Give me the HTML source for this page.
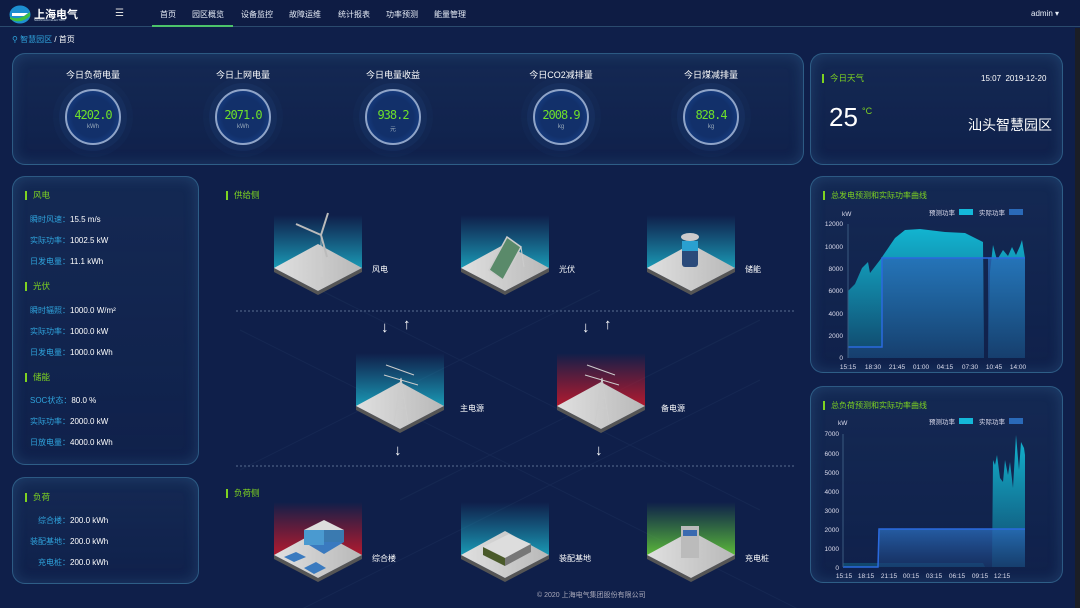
<!DOCTYPE html>
<html><head><meta charset="utf-8">
<style>
*{margin:0;padding:0;box-sizing:border-box}
body{width:1080px;height:608px;overflow:hidden;background:#0f1f4a;font-family:"Liberation Sans","Noto Sans CJK SC",sans-serif;color:#fff;position:relative}
.a{position:absolute;white-space:nowrap}
.nav{position:absolute;left:0;top:0;width:1080px;height:27px;background:#0e1c44;border-bottom:1px solid #2a4a6e}
.nav span{position:absolute;top:9px;font-size:8px;color:#e8eef8}
.panel{position:absolute;border:1px solid rgba(80,160,200,.45);border-radius:13px;background:linear-gradient(180deg,rgba(30,60,100,.35),rgba(20,40,80,.25));box-shadow:inset 0 0 14px rgba(70,140,190,.25)}
.h{position:absolute;font-size:8.5px;color:#7ed321;padding-left:6px;border-left:2px solid #7ed321;line-height:9px}
.lb{position:absolute;font-size:8px;color:#2fa3dc}
.lb b{color:#fff;font-weight:normal}
.gt{position:absolute;font-size:9px;color:#fff;width:120px;text-align:center;top:68px}
.g{position:absolute;top:89px;width:56px;height:56px;border-radius:50%;border:2px solid #8fa4c8;background:radial-gradient(circle,#12306a 55%,#1a4a9a 100%);box-shadow:0 0 0 6px rgba(40,80,140,.18),0 0 0 12px rgba(40,80,140,.08)}
.g .v{position:absolute;top:17px;width:100%;text-align:center;color:#6ee02a;font-size:12px;font-family:"DejaVu Sans Mono",monospace;letter-spacing:-1px}
.g .u{position:absolute;top:33px;width:100%;text-align:center;color:#9ab;font-size:6px}
.tl{position:absolute;font-size:8px;color:#fff}
.arr{position:absolute;font-size:15px;color:#fff;font-weight:bold}
</style></head><body>
<div class="nav">
 <svg class="a" style="left:9px;top:5px" width="22" height="19" viewBox="0 0 22 19"><ellipse cx="11" cy="9.5" rx="10.5" ry="9" fill="#1d8fd0"/><path d="M1 12 Q11 16 21 7 L21 11 Q11 20 1 14Z" fill="#3fbf3f"/><path d="M3 8 L19 8 L15 11 L3 11Z" fill="#fff"/></svg>
 <div class="a" style="left:34px;top:6px;font-size:11px;font-weight:bold">上海电气</div>
 <div class="a" style="left:34px;top:18px;font-size:3px;color:#cde">SHANGHAI ELECTRIC</div>
 <div class="a" style="left:115px;top:8px;font-size:10px;color:#ddd">☰</div>
 <span style="left:160px">首页</span><span style="left:192px">园区概览</span><span style="left:241px">设备监控</span><span style="left:289px">故障运维</span><span style="left:338px">统计报表</span><span style="left:386px">功率预测</span><span style="left:434px">能量管理</span>
 <div class="a" style="left:152px;top:25px;width:81px;height:2px;background:#4cc36a"></div>
 <span style="left:1031px">admin ▾</span>
</div>
<div class="a" style="left:12px;top:34px;font-size:8px;color:#2fa3dc">⚲ 智慧园区 <span style="color:#fff">/ 首页</span></div>

<div class="panel" style="left:12px;top:53px;width:792px;height:112px"></div>
<div class="gt" style="left:33px">今日负荷电量</div><div class="gt" style="left:183px">今日上网电量</div><div class="gt" style="left:333px">今日电量收益</div><div class="gt" style="left:501px">今日CO2减排量</div><div class="gt" style="left:651px">今日煤减排量</div>
<div class="g" style="left:65px"><div class="v">4202.0</div><div class="u">kWh</div></div>
<div class="g" style="left:215px"><div class="v">2071.0</div><div class="u">kWh</div></div>
<div class="g" style="left:365px"><div class="v">938.2</div><div class="u">元</div></div>
<div class="g" style="left:533px"><div class="v">2008.9</div><div class="u">kg</div></div>
<div class="g" style="left:683px"><div class="v">828.4</div><div class="u">kg</div></div>

<div class="panel" style="left:810px;top:53px;width:253px;height:112px"></div>
<div class="h" style="left:822px;top:74px">今日天气</div>
<div class="a" style="left:981px;top:74px;font-size:8px">15:07&nbsp; 2019-12-20</div>
<div class="a" style="left:829px;top:102px;font-size:26px">25</div>
<div class="a" style="left:862px;top:106px;font-size:9px;color:#7ed321">°C</div>
<div class="a" style="left:968px;top:115px;font-size:14px">汕头智慧园区</div>

<div class="panel" style="left:12px;top:176px;width:187px;height:289px"></div>
<div class="h" style="left:25px;top:191px">风电</div>
<div class="lb" style="left:30px;top:214px">瞬时风速：<b>15.5 m/s</b></div>
<div class="lb" style="left:30px;top:235px">实际功率：<b>1002.5 kW</b></div>
<div class="lb" style="left:30px;top:256px">日发电量：<b>11.1 kWh</b></div>
<div class="h" style="left:25px;top:282px">光伏</div>
<div class="lb" style="left:30px;top:305px">瞬时辐照：<b>1000.0 W/m²</b></div>
<div class="lb" style="left:30px;top:326px">实际功率：<b>1000.0 kW</b></div>
<div class="lb" style="left:30px;top:347px">日发电量：<b>1000.0 kWh</b></div>
<div class="h" style="left:25px;top:373px">储能</div>
<div class="lb" style="left:30px;top:395px">SOC状态：<b>80.0 %</b></div>
<div class="lb" style="left:30px;top:416px">实际功率：<b>2000.0 kW</b></div>
<div class="lb" style="left:30px;top:437px">日放电量：<b>4000.0 kWh</b></div>

<div class="panel" style="left:12px;top:477px;width:187px;height:107px"></div>
<div class="h" style="left:25px;top:493px">负荷</div>
<div class="lb" style="left:38px;top:515px">综合楼：<b>200.0 kWh</b></div>
<div class="lb" style="left:30px;top:536px">装配基地：<b>200.0 kWh</b></div>
<div class="lb" style="left:38px;top:557px">充电桩：<b>200.0 kWh</b></div>

<svg class="a" style="left:200px;top:170px" width="610" height="438" viewBox="0 0 610 438">
 <defs>
  <linearGradient id="tb" x1="0" y1="0" x2="0" y2="1"><stop offset="0" stop-color="#1a8fb0" stop-opacity="0"/><stop offset="1" stop-color="#1a9ab5"/></linearGradient>
  <linearGradient id="rd" x1="0" y1="0" x2="0" y2="1"><stop offset="0" stop-color="#c01a2a" stop-opacity="0"/><stop offset="1" stop-color="#b01a30"/></linearGradient>
  <linearGradient id="gr" x1="0" y1="0" x2="0" y2="1"><stop offset="0" stop-color="#4caf3a" stop-opacity="0"/><stop offset="1" stop-color="#5cb83a"/></linearGradient>
  <linearGradient id="pl" x1="0" y1="0" x2="1" y2="0"><stop offset="0" stop-color="#e0e0e0"/><stop offset="1" stop-color="#b8b8b8"/></linearGradient>
  <g id="base"><polygon points="0,57 44,80 88,57 88,53 44,76 0,53" fill="#555"/><polygon points="0,53 44,29 88,53 44,76" fill="url(#pl)"/></g>
 </defs>
 <g stroke="rgba(120,150,200,.07)" stroke-width="1" fill="none">
  <path d="M40 160 L600 440 M120 120 L560 340 M40 300 L400 120 M200 330 L560 150 M100 440 L560 210"/>
 </g>
 <line x1="36" y1="141" x2="595" y2="141" stroke="#5a6e90" stroke-dasharray="2,2"/>
 <line x1="36" y1="296" x2="595" y2="296" stroke="#5a6e90" stroke-dasharray="2,2"/>
 <g transform="translate(74,45)"><rect width="88" height="53" fill="url(#tb)"/><use href="#base"/><path d="M45 62 L47 20 L49 62Z" fill="#ccc"/><path d="M47 20 L22 9 M47 20 L54 -2 M47 20 L53 42" stroke="#bbb" stroke-width="2"/></g>
 <g transform="translate(261,45)"><rect width="88" height="53" fill="url(#tb)"/><use href="#base"/><polygon points="28,55 46,22 60,32 42,65" fill="#5a8a6a" stroke="#ccc" stroke-width="1.5"/><path d="M60 32 L63 52" stroke="#ccc"/></g>
 <g transform="translate(447,45)"><rect width="88" height="53" fill="url(#tb)"/><use href="#base"/><rect x="35" y="26" width="16" height="26" rx="3" fill="#2a4a7a"/><rect x="35" y="26" width="16" height="10" fill="#2aa0d0"/><ellipse cx="43" cy="22" rx="9" ry="4" fill="#ccc"/></g>
 <g transform="translate(156,183)"><rect width="88" height="53" fill="url(#tb)"/><use href="#base"/><path d="M38 70 L45 25 L52 70 M40 55 L50 55 M41 45 L49 45 M28 22 L62 32 M30 12 L58 22" stroke="#ccc" stroke-width="1" fill="none"/></g>
 <g transform="translate(357,183)"><rect width="88" height="53" fill="url(#rd)"/><use href="#base"/><path d="M38 70 L45 25 L52 70 M40 55 L50 55 M41 45 L49 45 M28 22 L62 32 M30 12 L58 22" stroke="#ccc" stroke-width="1" fill="none"/></g>
 <g transform="translate(74,332)"><rect width="88" height="53" fill="url(#rd)"/><use href="#base"/><polygon points="30,40 50,30 70,40 50,52" fill="#3a7abf"/><polygon points="30,28 50,18 70,28 50,40" fill="#ddd"/><rect x="30" y="28" width="20" height="15" fill="#4a9ad0"/><rect x="50" y="28" width="20" height="12" fill="#3a7ab0"/><polygon points="10,55 22,50 32,55 20,60" fill="#3a7abf"/><polygon points="30,66 42,60 52,66 40,72" fill="#3a7abf"/></g>
 <g transform="translate(261,332)"><rect width="88" height="53" fill="url(#tb)"/><use href="#base"/><polygon points="22,45 48,32 70,42 44,56" fill="#ddd"/><polygon points="22,45 44,56 44,64 22,53" fill="#4a5a2a"/><polygon points="44,56 70,42 70,50 44,64" fill="#777"/></g>
 <g transform="translate(447,332)"><rect width="88" height="53" fill="url(#gr)"/><use href="#base"/><rect x="34" y="24" width="18" height="32" fill="#bbb"/><rect x="36" y="28" width="14" height="6" fill="#3a6ab0"/></g>
</svg>
<div class="h" style="left:226px;top:191px">供给侧</div>
<div class="h" style="left:226px;top:489px">负荷侧</div>
<div class="tl" style="left:372px;top:264px">风电</div>
<div class="tl" style="left:559px;top:264px">光伏</div>
<div class="tl" style="left:745px;top:264px">储能</div>
<div class="tl" style="left:460px;top:403px">主电源</div>
<div class="tl" style="left:661px;top:403px">备电源</div>
<div class="tl" style="left:372px;top:553px">综合楼</div>
<div class="tl" style="left:559px;top:553px">装配基地</div>
<div class="tl" style="left:745px;top:553px">充电桩</div>
<div class="arr" style="left:381px;top:319px">↓</div><div class="arr" style="left:403px;top:316px">↑</div>
<div class="arr" style="left:582px;top:319px">↓</div><div class="arr" style="left:604px;top:316px">↑</div>
<div class="arr" style="left:394px;top:442px">↓</div><div class="arr" style="left:595px;top:442px">↓</div>
<div class="a" style="left:537px;top:590px;font-size:7px;color:#aab">© 2020 上海电气集团股份有限公司</div>

<div class="panel" style="left:810px;top:176px;width:253px;height:197px"></div>
<div class="panel" style="left:810px;top:386px;width:253px;height:197px"></div>
<div class="h" style="left:823px;top:191px;font-size:8px">总发电预测和实际功率曲线</div>
<div class="h" style="left:823px;top:401px;font-size:8px">总负荷预测和实际功率曲线</div>
<svg class="a" style="left:810px;top:170px" width="265" height="438" viewBox="810 170 265 438" font-size="6.5" fill="#dde" font-family="Liberation Sans,Noto Sans CJK SC,sans-serif">
 <defs>
  <linearGradient id="c1" x1="0" y1="0" x2="0" y2="1"><stop offset="0" stop-color="#12b4d0"/><stop offset="1" stop-color="#11456a"/></linearGradient>
  <linearGradient id="c2" x1="0" y1="0" x2="0" y2="1"><stop offset="0" stop-color="#2a6ab8" stop-opacity=".8"/><stop offset="1" stop-color="#1a3a70" stop-opacity=".6"/></linearGradient>
 </defs>
 <text x="842" y="216">kW</text>
 <text x="929" y="215">预测功率</text><rect x="959" y="209" width="14" height="6" fill="#14b8d8"/>
 <text x="979" y="215">实际功率</text><rect x="1009" y="209" width="14" height="6" fill="#2a6ab8"/>
 <g text-anchor="end"><text x="843" y="226">12000</text><text x="843" y="249">10000</text><text x="843" y="271">8000</text><text x="843" y="293">6000</text><text x="843" y="316">4000</text><text x="843" y="338">2000</text><text x="843" y="360">0</text></g>
 <path d="M848 291 L855 284 L862 268 L868 262 L870 273 L880 260 L895 238 L905 230 L920 229 L945 232 L965 233 L983 242 L984 358 L988 358 L990 272 L993 245 L997 260 L1003 250 L1008 256 L1012 247 L1016 255 L1020 246 L1022 240 L1025 258 L1025 358 L848 358Z" fill="url(#c1)"/>
 <path d="M848 347 L882 347 L882 258 L983 258 L984 358 L988 358 L988 258 L1025 258 L1025 358 L848 358Z" fill="url(#c2)"/>
 <path d="M848 347 L882 347 L882 258 L1025 258" stroke="#2a6adf" stroke-width="1.5" fill="none"/>
 <line x1="848" y1="224" x2="848" y2="358" stroke="#3a5a80"/>
 <g text-anchor="middle"><text x="848" y="369">15:15</text><text x="873" y="369">18:30</text><text x="897" y="369">21:45</text><text x="921" y="369">01:00</text><text x="945" y="369">04:15</text><text x="970" y="369">07:30</text><text x="994" y="369">10:45</text><text x="1018" y="369">14:00</text></g>

 <text x="838" y="425">kW</text>
 <text x="929" y="424">预测功率</text><rect x="959" y="418" width="14" height="6" fill="#14b8d8"/>
 <text x="979" y="424">实际功率</text><rect x="1009" y="418" width="14" height="6" fill="#2a6ab8"/>
 <g text-anchor="end"><text x="839" y="436">7000</text><text x="839" y="456">6000</text><text x="839" y="475">5000</text><text x="839" y="494">4000</text><text x="839" y="513">3000</text><text x="839" y="532">2000</text><text x="839" y="551">1000</text><text x="839" y="570">0</text></g>
 <path d="M843 563 L983 563 L985 567 L992 567 L993 460 L995 465 L997 455 L1000 478 L1003 482 L1005 460 L1008 475 L1010 462 L1013 488 L1016 435 L1019 470 L1021 442 L1024 448 L1025 455 L1025 567 L843 567Z" fill="url(#c1)"/>
 <path d="M843 567 L878 567 L879 529 L1025 529 L1025 567Z" fill="url(#c2)"/>
 <path d="M843 567 L878 567 L879 529 L1025 529" stroke="#2a6adf" stroke-width="1.5" fill="none"/>
 <line x1="843" y1="434" x2="843" y2="567" stroke="#3a5a80"/>
 <g text-anchor="middle"><text x="844" y="578">15:15</text><text x="866" y="578">18:15</text><text x="889" y="578">21:15</text><text x="911" y="578">00:15</text><text x="934" y="578">03:15</text><text x="957" y="578">06:15</text><text x="980" y="578">09:15</text><text x="1002" y="578">12:15</text></g>
</svg>
<div class="a" style="left:1075px;top:28px;width:5px;height:580px;background:#1b1e26"></div>
</body></html>
